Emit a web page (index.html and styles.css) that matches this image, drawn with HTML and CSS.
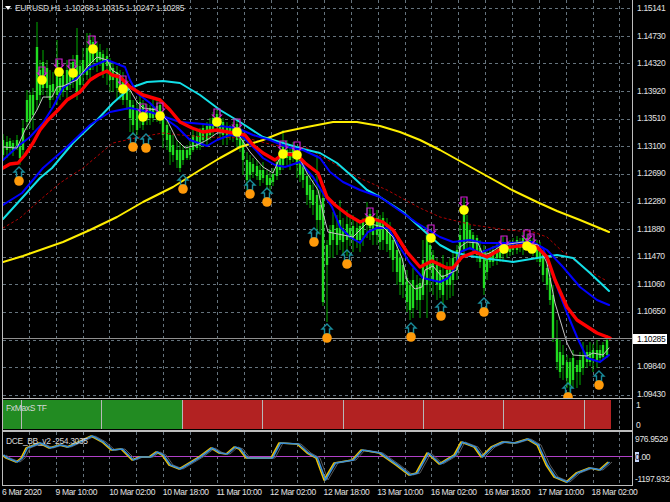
FILE: index.html
```html
<!DOCTYPE html>
<html lang="en">
<head>
<meta charset="utf-8">
<title>EURUSD,H1</title>
<link rel="stylesheet" href="styles.css">
</head>
<body>
<main class="terminal">

  <section class="row row-main">
    <div class="pane">
      <svg class="plot" width="629" height="398" viewBox="3 0 629 398">
        <defs>
          <path id="dn" d="M-3 0H3V6H4.5L0 11L-4.5 6H-3Z"/>
          <path id="up" d="M0 0L5 5H2.5V10H-2.5V5H-5Z"/>
        </defs>
        <path class="grid" d="M3 8.5H632M3 36.5H632M3 63.5H632M3 91.5H632M3 119.5H632M3 146.5H632M3 174.5H632M3 202.5H632M3 229.5H632M3 257.5H632M3 284.5H632M3 312.5H632M3 340.5H632M3 367.5H632M3 395.5H632M29.5 0V398M56.5 0V398M83.5 0V398M109.5 0V398M136.5 0V398M163.5 0V398M190.5 0V398M217.5 0V398M244.5 0V398M271.5 0V398M297.5 0V398M324.5 0V398M351.5 0V398M378.5 0V398M405.5 0V398M431.5 0V398M458.5 0V398M485.5 0V398M512.5 0V398M539.5 0V398M566.5 0V398M593.5 0V398M619.5 0V398"/>
        <path class="wick" d="M3 134V160M7 136V158M10 138V153M13 140V156M17 135V150M20 142V165M23 120V155M27 90V130M30 92V128M33 88V130M37 22V110M40 60V103M43 50V95M47 60V98M50 70V108M53 72V100M57 40V105M60 72V100M63 70V97M67 60V100M70 62V90M73 55V88M77 28V100M80 60V90M83 48V85M87 33V80M90 33V78M93 36V70M97 42V72M100 44V66M103 50V78M107 48V85M110 58V92M113 62V92M117 66V100M120 70V100M123 72V105M127 80V110M130 90V132M133 100V135M137 100V135M140 96V128M143 100V130M147 104V125M150 105V125M153 100V122M157 100V122M160 98V124M163 110V148M167 120V150M170 130V165M173 135V162M177 140V168M180 142V172M183 145V165M187 145V160M190 140V160M193 130V152M197 130V150M200 128V150M203 125V147M207 122V146M210 118V140M213 112V136M217 108V130M220 112V138M223 118V145M227 122V145M230 125V140M233 122V142M237 118V148M240 125V152M243 130V175M247 152V190M250 155V180M253 158V178M257 160V180M260 165V186M263 162V183M267 170V190M270 172V192M273 168V186M277 158V180M280 148V174M283 130V170M287 140V165M290 145V170M293 142V162M297 148V178M300 155V182M303 160V188M307 170V205M310 175V208M313 180V215M317 155V235M320 190V235M323 190V306M327 240V322M330 225V258M333 212V258M337 215V255M340 200V250M343 218V254M347 210V256M350 218V246M353 215V252M357 222V248M360 220V252M363 218V246M367 202V238M370 208V240M373 216V245M377 210V245M380 215V250M383 212V250M387 218V252M390 222V258M393 235V272M397 240V285M400 250V295M403 258V298M407 270V312M410 280V320M413 268V318M417 275V310M420 278V318M423 240V300M427 225V318M430 238V292M433 250V295M437 258V300M440 262V298M443 255V305M447 262V300M450 258V298M453 250V296M457 245V280M460 225V262M464 198V255M467 215V248M470 225V250M473 232V255M477 235V262M480 240V268M484 245V295M487 250V280M490 248V268M493 246V266M497 244V265M500 240V262M503 236V262M507 238V258M510 240V256M513 238V255M517 236V254M520 238V252M523 232V255M527 234V250M530 235V254M533 238V256M537 240V262M540 242V266M543 250V282M547 260V290M550 270V305M553 285V342M557 320V370M560 340V378M563 345V380M567 355V388M570 358V392M573 350V388M577 360V388M580 352V385M583 342V375M587 345V368M590 342V366M593 344V372M597 340V368M600 345V363M603 342V360M607 335V358"/>
        <path class="body" id="bd-up" d="M3 140V155M10 141V148M17 140V147M23 128V150M27 100V122M30 95V120M37 47V100M43 62V88M50 85V100M57 60V95M63 75V92M70 68V85M77 55V95M83 60V75M90 40V70M97 50V62M103 54V72M113 68V80M120 76V90M127 85V100M137 108V130M140 102V115M147 110V118M153 108V118M160 105V118M173 145V155M183 150V160M190 148V155M193 135V150M200 132V146M203 128V140M210 125V135M217 114V126M223 122V135M230 128V135M240 130V148M250 162V175M260 170V180M263 170V178M273 174V182M277 162V176M280 152V170M287 150V158M293 148V158M330 230V245M333 225V240M340 220V240M350 228V238M357 228V240M363 222V235M367 215V225M373 220V235M380 222V242M387 225V244M410 285V310M417 285V300M420 283V300M427 235V285M433 255V280M440 270V290M447 270V285M450 268V285M457 250V270M460 235V255M464 205V250M470 230V240M477 238V255M487 255V272M490 252V262M497 250V258M500 246V258M507 242V252M513 242V250M517 240V250M523 238V248M530 240V248M563 355V365M573 358V380M577 365V372M583 355V368M587 352V362M593 350V358M600 350V358M603 345V357M607 340V355"/>
        <use class="inner-up" href="#bd-up"/>
        <path class="body" id="bd-dn" d="M7 142V150M13 143V150M20 146V158M33 95V115M40 70V95M47 68V88M53 84V92M60 78V95M67 70V90M73 62V80M80 66V85M87 48V75M93 42V62M100 52V60M107 56V66M110 62V80M117 72V88M123 82V100M130 100V118M133 105V125M143 105V125M150 108V118M157 106V115M163 115V135M167 125V140M170 135V152M177 150V160M180 150V168M187 150V158M197 136V148M207 126V140M213 118V130M220 118V132M227 126V138M233 126V136M237 124V140M243 140V160M247 160V180M253 164V172M257 166V176M267 175V185M270 178V185M283 146V165M290 152V160M297 152V165M300 160V175M303 165V180M307 176V195M310 185V200M313 190V205M317 195V220M320 205V220M323 198V302M327 245V265M337 228V245M343 228V242M347 224V240M353 226V240M360 226V240M370 214V228M377 218V235M383 218V240M390 228V250M393 240V260M397 250V272M400 258V282M403 265V285M407 278V302M413 280V308M423 260V295M430 245V270M437 265V285M443 275V295M453 258V280M467 222V240M473 235V250M480 248V262M484 250V288M493 250V262M503 242V254M510 245V252M520 242V248M527 238V246M533 242V252M537 244V258M540 246V262M543 255V275M547 268V285M550 278V300M553 295V338M557 338V362M560 352V372M567 362V378M570 362V385M580 360V372M590 352V362M597 350V360"/>
        <use class="inner-dn" href="#bd-dn"/>
        <polyline class="ma dots" points="3,228 20,218 40,200 60,183 83,168 113,143 140,137 163,133 180,135 207,137 247,138 273,145 307,148 333,163 357,177 387,190 420,208 440,217 473,225 507,230 533,232 547,237 563,252 587,270 607,281"/>
        <polyline class="ma yellow" points="3,262 23,256 63,242 90,230 117,217 143,202 173,187 200,170 220,158 240,147 263,140 283,132 307,127 333,122 357,122 380,126 400,132 420,140 440,150 476,170 512,190 537,202 557,211 580,220 609,232"/>
        <polyline class="ma cyan" points="3,219 23,197 40,178 52,168 73,143 97,120 113,103 130,88 147,82 163,81 180,83 200,95 220,110 240,122 263,137 283,143 303,149 320,153 337,163 353,177 367,190 380,197 403,212 423,230 440,245 453,252 470,256 490,259 513,262 537,258 557,255 573,258 590,273 609,291"/>
        <polyline class="ma blue" points="3,205 22,193 43,168 67,147 90,125 110,112 130,108 150,112 180,122 203,124 220,126 237,128 253,135 270,140 287,147 303,150 320,158 330,172 343,182 360,190 380,197 403,213 417,223 440,237 453,242 470,240 483,243 507,243 533,242 547,250 563,267 580,287 597,300 609,305"/>
        <polyline class="ma blue" points="3,160 17,147 30,137 43,123 53,107 63,88 77,78 90,67 107,60 125,67 130,80 137,93 150,103 163,117 177,127 190,140 207,146 217,140 230,135 243,137 253,147 263,158 275,165 285,167 300,162 313,177 323,193 332,207 340,227 350,237 360,243 368,232 377,228 388,228 397,243 410,263 423,278 440,282 448,278 455,268 460,252 470,248 480,253 492,248 500,245 520,243 530,242 543,248 557,287 567,313 577,337 587,358 600,362 609,355"/>
        <polyline class="ma thin" points="3,147 17,148 25,130 37,110 43,97 52,97 57,87 63,86 77,80 87,67 97,57 107,60 112,70 120,75 130,90 137,102 143,108 157,110 167,120 177,140 185,148 197,145 207,140 217,133 233,132 240,137 250,152 263,167 273,173 282,153 297,153 307,173 318,190 323,213 328,232 343,235 353,237 367,223 383,227 393,237 402,258 407,280 415,289 422,287 425,270 433,266 442,277 457,270 460,247 467,242 478,243 483,255 490,253 502,245 523,242 538,245 547,263 555,303 567,343 573,355 587,356 593,353 603,355 609,348"/>
        <polyline class="ma red" points="3,168 10,164 18,163 25,155 33,143 40,130 48,120 58,110 67,100 80,92 90,80 98,75 107,71 112,75 120,77 130,87 143,95 160,100 170,110 180,122 192,128 203,132 217,130 233,133 245,135 253,145 263,153 275,160 283,154 297,155 305,163 318,173 327,197 335,205 348,215 360,222 370,218 383,222 393,230 407,252 420,267 432,261 447,268 453,268 462,257 475,252 487,257 503,248 527,245 537,247 547,257 555,280 567,307 577,320 597,333 610,338"/>
        <path class="last-price" d="M3 338.5H632"/>
        <g class="sell">
          <use href="#dn" x="42" y="67"/><use href="#dn" x="59" y="59"/><use href="#dn" x="72" y="60"/><use href="#dn" x="92" y="36"/><use href="#dn" x="123" y="76"/><use href="#dn" x="143" y="104"/><use href="#dn" x="160" y="103"/><use href="#dn" x="217" y="109"/><use href="#dn" x="237" y="119"/><use href="#dn" x="283" y="141"/><use href="#dn" x="297" y="142"/><use href="#dn" x="370" y="208"/><use href="#dn" x="431" y="225"/><use href="#dn" x="464" y="197"/><use href="#dn" x="504" y="236"/><use href="#dn" x="527" y="230"/><use href="#dn" x="531" y="234"/>
        </g>
        <g class="yellow-dots">
          <circle cx="42" cy="80" r="4.8"/><circle cx="59" cy="72" r="4.8"/><circle cx="73" cy="73" r="4.8"/><circle cx="93" cy="49" r="4.8"/><circle cx="123" cy="89" r="4.8"/><circle cx="143" cy="117" r="4.8"/><circle cx="160" cy="116" r="4.8"/><circle cx="217" cy="122" r="4.8"/><circle cx="237" cy="132" r="4.8"/><circle cx="283" cy="154" r="4.8"/><circle cx="297" cy="155" r="4.8"/><circle cx="370" cy="221" r="4.8"/><circle cx="431" cy="238" r="4.8"/><circle cx="464" cy="210" r="4.8"/><circle cx="504" cy="249" r="4.8"/><circle cx="527" cy="246" r="4.8"/><circle cx="532" cy="249" r="4.8"/>
        </g>
        <g class="buy">
          <use href="#up" x="19" y="167"/><use href="#up" x="133" y="133"/><use href="#up" x="146" y="134"/><use href="#up" x="183" y="175"/><use href="#up" x="250" y="180"/><use href="#up" x="267" y="188"/><use href="#up" x="314" y="228"/><use href="#up" x="347" y="250"/><use href="#up" x="327" y="324"/><use href="#up" x="411" y="323"/><use href="#up" x="441" y="302"/><use href="#up" x="484" y="298"/><use href="#up" x="568" y="383"/><use href="#up" x="599" y="371"/>
        </g>
        <g class="orange-dots">
          <circle cx="19" cy="181" r="4.8"/><circle cx="133" cy="147" r="4.8"/><circle cx="146" cy="148" r="4.8"/><circle cx="183" cy="189" r="4.8"/><circle cx="250" cy="194" r="4.8"/><circle cx="267" cy="202" r="4.8"/><circle cx="314" cy="242" r="4.8"/><circle cx="347" cy="264" r="4.8"/><circle cx="327" cy="338" r="4.8"/><circle cx="411" cy="337" r="4.8"/><circle cx="441" cy="316" r="4.8"/><circle cx="484" cy="312" r="4.8"/><circle cx="568" cy="397" r="4.8"/><circle cx="599" cy="385" r="4.8"/>
        </g>
      </svg>
      <div class="chart-title"><i class="caret"></i><span>EURUSD,H1&nbsp; 1.10268 1.10315 1.10247 1.10285</span></div>
    </div>
    <div class="scale scale-price">
      <span>1.15141</span><span>1.14730</span><span>1.14320</span><span>1.13920</span><span>1.13510</span><span>1.13100</span><span>1.12690</span><span>1.12280</span><span>1.11880</span><span>1.11470</span><span>1.11060</span><span>1.10650</span><span class="current">1.10285</span><span>1.09840</span><span>1.09430</span>
    </div>
  </section>

  <section class="row row-bars">
    <div class="pane">
      <div class="bars">
        <div class="seg green s18"></div>
        <div class="seg green s80"></div>
        <div class="seg green s81"></div>
        <div class="seg red s80"></div>
        <div class="seg red s81"></div>
        <div class="seg red s80"></div>
        <div class="seg red s80"></div>
        <div class="seg red s81"></div>
        <div class="seg red s27"></div>
        <div class="bars-rest"></div>
      </div>
      <div class="pane-label">FxMaxS TF</div>
    </div>
    <div class="scale scale-bars"><span>1</span><span>0</span></div>
  </section>

  <section class="row row-osc">
    <div class="pane">
      <svg class="plot" width="629" height="53" viewBox="3 432 629 53">
        <defs>
          <polyline id="osc" points="3,455 7,458 17,462 22,458 27,448 40,443 50,448 60,445 68,447 77,443 92,436 103,442 112,450 122,449 133,460 140,457 150,457 157,452 163,455 170,465 180,469 190,463 200,457 212,448 220,453 227,454 235,447 240,449 247,458 260,458 272,458 280,443 298,444 308,453 317,458 325,480 335,463 353,460 362,450 380,453 397,465 410,475 417,473 428,453 440,464 455,455 462,442 475,447 482,457 492,447 503,442 515,443 528,439 538,445 547,465 555,477 567,482 577,473 590,468 600,470 609,462"/>
        </defs>
        <path class="grid" d="M29.5 432V485M56.5 432V485M83.5 432V485M109.5 432V485M136.5 432V485M163.5 432V485M190.5 432V485M217.5 432V485M244.5 432V485M271.5 432V485M297.5 432V485M324.5 432V485M351.5 432V485M378.5 432V485M405.5 432V485M431.5 432V485M458.5 432V485M485.5 432V485M512.5 432V485M539.5 432V485M566.5 432V485M593.5 432V485M619.5 432V485"/>
        <path class="zero" d="M3 456.5H632"/>
        <use class="osc-gray" href="#osc" x="3"/>
        <use class="osc-gold" href="#osc" x="-1"/>
        <use class="osc-blue" href="#osc" x="0.5"/>
      </svg>
      <div class="pane-label">DCE_BB_v2 -254.3035</div>
    </div>
    <div class="scale scale-osc">
      <span>976.9529</span><span class="osc-zero"><b class="zero-mark">0</b>.00</span><span>-1197.932</span>
    </div>
  </section>

  <footer class="time-axis">
    <span>6 Mar 2020</span><span>9 Mar 10:00</span><span>10 Mar 02:00</span><span>10 Mar 18:00</span><span>11 Mar 10:00</span><span>12 Mar 02:00</span><span>12 Mar 18:00</span><span>13 Mar 10:00</span><span>16 Mar 02:00</span><span>16 Mar 18:00</span><span>17 Mar 10:00</span><span>18 Mar 02:00</span>
  </footer>

</main>
</body>
</html>
```

FILE: styles.css
```css
* { box-sizing: border-box; }

html, body {
  margin: 0;
  padding: 0;
  background: #000;
}

body {
  width: 670px;
  height: 502px;
  overflow: hidden;
  font-family: "Liberation Sans", Arial, sans-serif;
  font-size: 8.5px;
  line-height: 10px;
  letter-spacing: -0.35px;
  color: #e2e2e2;
}

.terminal {
  display: flex;
  flex-direction: column;
  height: 502px;
  padding-left: 2px;
}

.row {
  display: flex;
  flex: none;
}

.row-main { height: 399px; }
.row-bars { height: 32px; }
.row-osc { height: 55px; }

.pane {
  position: relative;
  flex: none;
  width: 631px;
  border-left: 1px solid #bdbdbd;
  border-right: 1px solid #bdbdbd;
  border-bottom: 1px solid #bdbdbd;
}

.row-osc .pane { border-top: 1px solid #bdbdbd; }

.plot { display: block; }

/* price chart */
.grid {
  fill: none;
  stroke: #65737d;
  stroke-width: 1;
  stroke-dasharray: 3 3;
}

.wick { fill: none; stroke: #00c000; stroke-width: 0.9; }
.body { fill: none; stroke: #20dc20; stroke-width: 2.2; }
.inner-up { stroke: #002a00; stroke-width: 0.8; }
.inner-dn { stroke: #d8ffd8; stroke-width: 0.8; }

.ma { fill: none; stroke-linejoin: round; stroke-linecap: round; }
.red { stroke: #ff0000; stroke-width: 3.4; }
.blue { stroke: #0000ff; stroke-width: 2; }
.cyan { stroke: #12e0e8; stroke-width: 2; }
.yellow { stroke: #ffee00; stroke-width: 2; }
.thin { stroke: #c4c4c4; stroke-width: 1; }
.dots { stroke: #b00000; stroke-width: 1; stroke-dasharray: 2 3; }

.last-price { stroke: #8f8f8f; stroke-width: 1; }

.sell { fill: none; stroke: #d020d0; stroke-width: 1.2; }
.buy { fill: none; stroke: #1a8c9c; stroke-width: 1.4; }
.yellow-dots { fill: #ffff00; }
.orange-dots { fill: #ff9a0a; }

.chart-title {
  position: absolute;
  top: 3px;
  left: 2px;
  display: flex;
  align-items: center;
  gap: 4px;
  color: #d8d8d8;
}

.caret {
  width: 0;
  height: 0;
  border-left: 3.5px solid transparent;
  border-right: 3.5px solid transparent;
  border-top: 4px solid #fff;
}

/* right-hand scales */
.scale {
  flex: 1;
  display: flex;
  flex-direction: column;
  justify-content: space-between;
  padding-left: 4px;
  white-space: nowrap;
}

.scale-price { padding-top: 3px; }

.scale-price .current {
  align-self: flex-start;
  width: 34px;
  margin-left: -4px;
  padding-left: 4px;
  background: #fff;
  color: #000;
}

.scale-bars { padding: 1px 0 1px 3px; }
.scale-osc { padding: 3px 0 2px 2px; }
.osc-zero { margin-bottom: 5px; }

.zero-mark {
  font-weight: normal;
  background: #c6d6f8;
  color: #223;
}

/* signal bar pane */
.bars {
  display: flex;
  height: 30px;
  margin-top: 1px;
}

.seg {
  flex: none;
  height: 29px;
  border-left: 1px solid #b8b8b8;
}

.seg:first-child { border-left: 0; }
.seg.green { background: #228b22; }
.seg.red { background: #b22222; }
.s18 { width: 18px; }
.s27 { width: 27px; }
.s80 { width: 80px; }
.s81 { width: 81px; }

.bars-rest {
  flex: none;
  width: 9px;
  height: 29px;
  border-right: 1px dashed #65737d;
}

.pane-label {
  position: absolute;
  top: 4px;
  left: 3px;
  color: #d8d8d8;
}

/* oscillator pane */
.zero { stroke: #b040c8; stroke-width: 1; }

.osc-gray, .osc-gold, .osc-blue { fill: none; stroke-linejoin: round; }
.osc-gray { stroke: #5a5a5a; stroke-width: 1; }
.osc-gold { stroke: #f2c400; stroke-width: 1.6; }
.osc-blue { stroke: #3b8fd6; stroke-width: 1.6; }

/* time axis */
.time-axis {
  display: grid;
  grid-template-columns: repeat(12, 53.6px);
  align-items: start;
  padding-top: 1px;
  white-space: nowrap;
}
```
